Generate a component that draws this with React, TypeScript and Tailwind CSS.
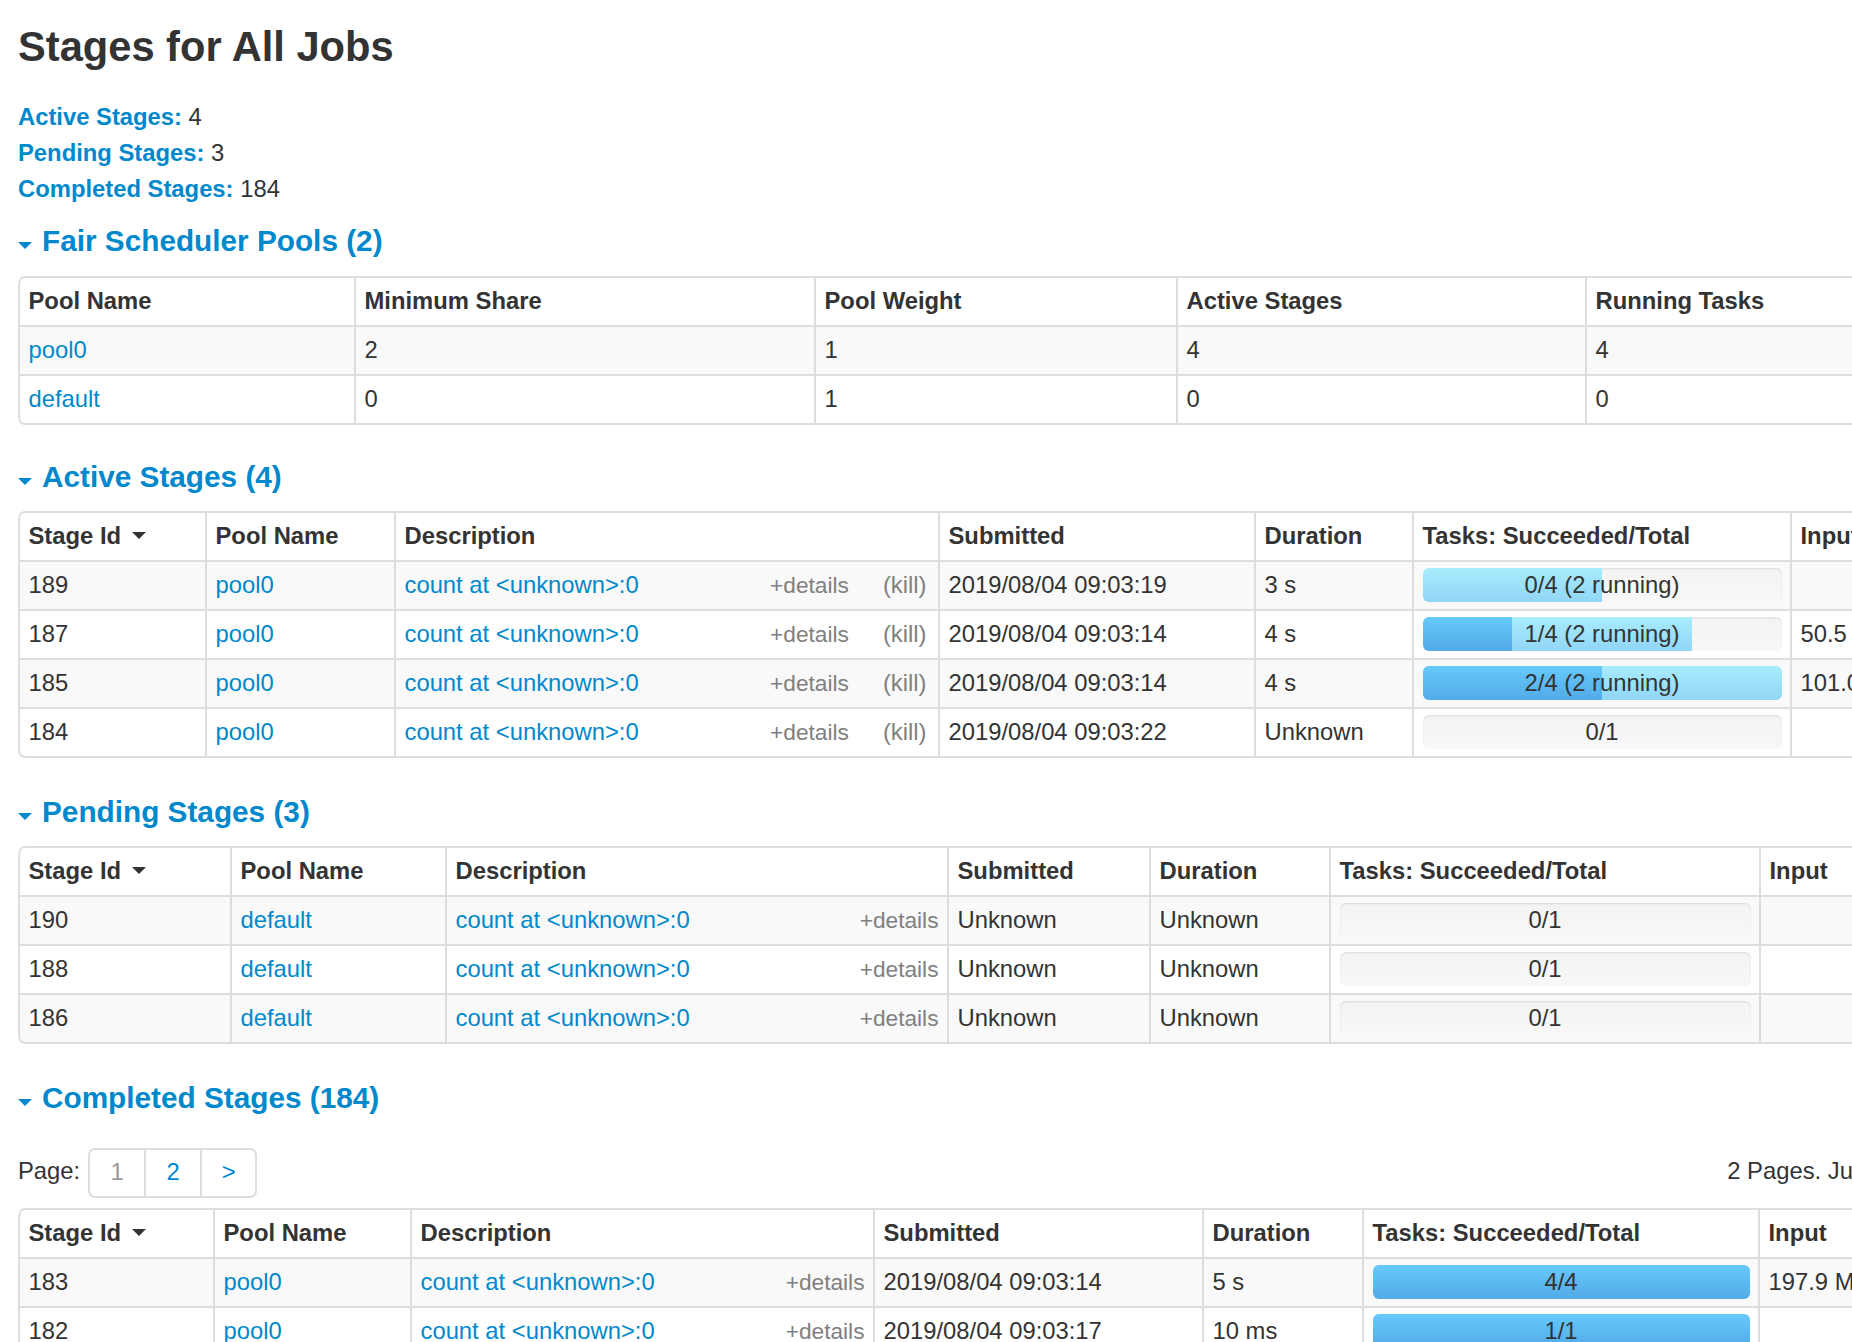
import React from 'react';

// Spark UI "Stages for All Jobs" page, scaled ~1.7x

interface Column {
  label: string;
  width: string;
  sort?: boolean;
}

interface TaskBar {
  done: number;
  running: number;
  total: number;
  label: string;
}

const LINK = 'text-[#0088cc]';

function SectionTitle({ children, className }: { children: React.ReactNode; className: string }) {
  return (
    <h4 className={`text-[29.75px] font-bold leading-[36px] text-[#0088cc] ${className}`}>
      <span className="mb-[2px] inline-block h-0 w-0 border-x-[7.5px] border-t-[7px] border-x-transparent border-t-[#0088cc] align-baseline" />
      <a className="ml-[10px]">{children}</a>
    </h4>
  );
}

function Progress({ done, running, total, label }: TaskBar) {
  const donePct = total ? (done / total) * 100 : 0;
  const runPct = total ? (running / total) * 100 : 0;
  return (
    <div className="relative flex h-[34px] overflow-hidden rounded-[6px] bg-linear-to-b from-[#f3f3f3] to-[#f8f8f8] shadow-[inset_0_1px_2px_rgba(0,0,0,0.1)]">
      <div className="h-full bg-linear-to-b from-[#66c9fb] to-[#52abe7]" style={{ width: `${donePct}%` }} />
      <div className="h-full bg-linear-to-b from-[#a9ecfe] to-[#90d6f5]" style={{ width: `${runPct}%` }} />
      <span className="absolute inset-0 text-center leading-[34px] text-[#333]">{label}</span>
    </div>
  );
}

function Description({ kill }: { kill?: boolean }) {
  return (
    <div className="flex items-baseline">
      <a className={LINK}>{'count at <unknown>:0'}</a>
      <span className="ml-auto text-[22.7px] text-[#808080]">+details</span>
      {kill && <span className="mr-[3px] ml-[34px] text-[#808080]">(kill)</span>}
    </div>
  );
}

function DataTable({ cols, rows, width, className }: { cols: Column[]; rows: React.ReactNode[][]; width: string; className: string }) {
  return (
    <table className={`table-fixed border-separate border-spacing-0 rounded-[7px] border-2 border-l-0 border-[#ddd] ${width} ${className}`}>
      <thead>
        <tr>
          {cols.map((c, i) => (
            <th
              key={c.label}
              className={`${c.width} border-l-2 border-[#ddd] px-[8.5px] pt-[5.5px] pb-[7.5px] text-left font-bold leading-[34px] whitespace-nowrap ${i === 0 ? 'rounded-tl-[7px]' : ''}`}
            >
              {c.sort ? (
                <span className="inline-flex items-center">
                  {c.label}
                  <svg className="ml-[11px]" width="14" height="7" viewBox="0 0 14 7">
                    <polygon points="0,0 14,0 7,7" fill="#333" />
                  </svg>
                </span>
              ) : (
                c.label
              )}
            </th>
          ))}
        </tr>
      </thead>
      <tbody>
        {rows.map((r, ri) => (
          <tr key={ri}>
            {r.map((cell, ci) => (
              <td
                key={ci}
                className={`border-t-2 border-l-2 border-[#ddd] px-[8.5px] pt-[5.5px] pb-[7.5px] leading-[34px] whitespace-nowrap ${ri % 2 === 0 ? 'bg-[#f9f9f9]' : 'bg-white'} ${ci === 0 && ri === rows.length - 1 ? 'rounded-bl-[7px]' : ''}`}
              >
                {cell}
              </td>
            ))}
          </tr>
        ))}
      </tbody>
    </table>
  );
}

const poolCols: Column[] = [
  { label: 'Pool Name', width: 'w-[336px]' },
  { label: 'Minimum Share', width: 'w-[460px]' },
  { label: 'Pool Weight', width: 'w-[362px]' },
  { label: 'Active Stages', width: 'w-[409px]' },
  { label: 'Running Tasks', width: 'w-[460px]' },
];

const activeCols: Column[] = [
  { label: 'Stage Id', width: 'w-[187px]', sort: true },
  { label: 'Pool Name', width: 'w-[189px]' },
  { label: 'Description', width: 'w-[544px]' },
  { label: 'Submitted', width: 'w-[316px]' },
  { label: 'Duration', width: 'w-[158px]' },
  { label: 'Tasks: Succeeded/Total', width: 'w-[378px]' },
  { label: 'Input', width: 'w-[250px]' },
];

const pendingCols: Column[] = [
  { label: 'Stage Id', width: 'w-[212px]', sort: true },
  { label: 'Pool Name', width: 'w-[215px]' },
  { label: 'Description', width: 'w-[502px]' },
  { label: 'Submitted', width: 'w-[202px]' },
  { label: 'Duration', width: 'w-[180px]' },
  { label: 'Tasks: Succeeded/Total', width: 'w-[430px]' },
  { label: 'Input', width: 'w-[250px]' },
];

const completedCols: Column[] = [
  { label: 'Stage Id', width: 'w-[195px]', sort: true },
  { label: 'Pool Name', width: 'w-[197px]' },
  { label: 'Description', width: 'w-[463px]' },
  { label: 'Submitted', width: 'w-[329px]' },
  { label: 'Duration', width: 'w-[160px]' },
  { label: 'Tasks: Succeeded/Total', width: 'w-[396px]' },
  { label: 'Input', width: 'w-[250px]' },
];

const pool = (name: string) => <a className={LINK}>{name}</a>;

export default function App() {
  const poolRows = [
    [pool('pool0'), '2', '1', '4', '4'],
    [pool('default'), '0', '1', '0', '0'],
  ];

  const activeRows = [
    ['189', pool('pool0'), <Description kill />, '2019/08/04 09:03:19', '3 s', <Progress done={0} running={2} total={4} label="0/4 (2 running)" />, ''],
    ['187', pool('pool0'), <Description kill />, '2019/08/04 09:03:14', '4 s', <Progress done={1} running={2} total={4} label="1/4 (2 running)" />, '50.5 MB'],
    ['185', pool('pool0'), <Description kill />, '2019/08/04 09:03:14', '4 s', <Progress done={2} running={2} total={4} label="2/4 (2 running)" />, '101.0 MB'],
    ['184', pool('pool0'), <Description kill />, '2019/08/04 09:03:22', 'Unknown', <Progress done={0} running={0} total={1} label="0/1" />, ''],
  ];

  const pendingRows = ['190', '188', '186'].map((id) => [
    id,
    pool('default'),
    <Description />,
    'Unknown',
    'Unknown',
    <Progress done={0} running={0} total={1} label="0/1" />,
    '',
  ]);

  const completedRows = [
    ['183', pool('pool0'), <Description />, '2019/08/04 09:03:14', '5 s', <Progress done={4} running={0} total={4} label="4/4" />, '197.9 MB'],
    ['182', pool('pool0'), <Description />, '2019/08/04 09:03:17', '10 ms', <Progress done={1} running={0} total={1} label="1/1" />, ''],
    ['181', pool('pool0'), <Description />, '2019/08/04 09:03:12', '2 s', <Progress done={1} running={0} total={1} label="1/1" />, ''],
  ];

  return (
    <div className="h-[1342px] w-[1852px] overflow-hidden bg-white font-['Liberation_Sans',Helvetica,Arial,sans-serif] text-[23.8px] text-[#333]">
      <div className="w-[2600px] pl-[18px]">
        <h3 className="pt-[22px] text-[41.65px] leading-[50px] font-bold text-[#333]">Stages for All Jobs</h3>

        <ul className="mt-[27px] leading-[36px]">
          <li>
            <a className={`${LINK} font-bold`}>Active Stages:</a> 4
          </li>
          <li>
            <a className={`${LINK} font-bold`}>Pending Stages:</a> 3
          </li>
          <li>
            <a className={`${LINK} font-bold`}>Completed Stages:</a> 184
          </li>
        </ul>

        <SectionTitle className="mt-[16px]">Fair Scheduler Pools (2)</SectionTitle>
        <DataTable cols={poolCols} rows={poolRows} width="w-[2029px]" className="mt-[17px]" />

        <SectionTitle className="mt-[34px]">Active Stages (4)</SectionTitle>
        <DataTable cols={activeCols} rows={activeRows} width="w-[2024px]" className="mt-[16px]" />

        <SectionTitle className="mt-[36px]">Pending Stages (3)</SectionTitle>
        <DataTable cols={pendingCols} rows={pendingRows} width="w-[1993px]" className="mt-[16px]" />

        <SectionTitle className="mt-[36px]">Completed Stages (184)</SectionTitle>
        <div className="mt-[32px] flex items-start">
          <span className="pt-[5px] pr-[8px]">Page:</span>
          <div className="flex h-[50px] rounded-[7px] border-2 border-[#ddd]">
            <span className="w-[54px] text-center leading-[43px] text-[#999]">1</span>
            <a className="w-[56px] border-l-2 border-[#ddd] text-center leading-[43px] text-[#0088cc]">2</a>
            <a className="w-[55px] border-l-2 border-[#ddd] text-center leading-[43px] text-[#0088cc]">&gt;</a>
          </div>
          <span className="ml-[1470px] pt-[5px] whitespace-nowrap">2 Pages. Jump to</span>
        </div>
        <DataTable cols={completedCols} rows={completedRows} width="w-[1992px]" className="mt-[10px]" />
      </div>
    </div>
  );
}
